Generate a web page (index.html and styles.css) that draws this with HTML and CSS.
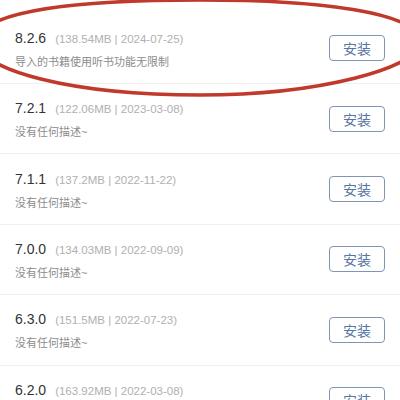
FILE: index.html
```html
<!DOCTYPE html>
<html lang="zh-CN">
<head>
<meta charset="utf-8">
<link rel="stylesheet" href="styles.css">
</head>
<body>
<div class="page">
  <ul class="list">
    <li class="row">
      <div class="info">
        <div class="head"><span class="ver">8.2.6</span><span class="meta">(138.54MB | 2024-07-25)</span></div>
        <div class="desc">导入的书籍使用听书功能无限制</div>
      </div>
      <button class="btn">安装</button>
    </li>
    <li class="row">
      <div class="info">
        <div class="head"><span class="ver">7.2.1</span><span class="meta">(122.06MB | 2023-03-08)</span></div>
        <div class="desc">没有任何描述~</div>
      </div>
      <button class="btn">安装</button>
    </li>
    <li class="row">
      <div class="info">
        <div class="head"><span class="ver">7.1.1</span><span class="meta">(137.2MB | 2022-11-22)</span></div>
        <div class="desc">没有任何描述~</div>
      </div>
      <button class="btn">安装</button>
    </li>
    <li class="row">
      <div class="info">
        <div class="head"><span class="ver">7.0.0</span><span class="meta">(134.03MB | 2022-09-09)</span></div>
        <div class="desc">没有任何描述~</div>
      </div>
      <button class="btn">安装</button>
    </li>
    <li class="row">
      <div class="info">
        <div class="head"><span class="ver">6.3.0</span><span class="meta">(151.5MB | 2022-07-23)</span></div>
        <div class="desc">没有任何描述~</div>
      </div>
      <button class="btn">安装</button>
    </li>
    <li class="row">
      <div class="info">
        <div class="head"><span class="ver">6.2.0</span><span class="meta">(163.92MB | 2022-03-08)</span></div>
        <div class="desc">没有任何描述~</div>
      </div>
      <button class="btn">安装</button>
    </li>
  </ul>
  <svg class="mark" width="400" height="110" viewBox="0 0 400 110" aria-hidden="true">
    <path d="M -24,42 C -20,10 80,0 200,0 C 320,0 418,12 422,42 C 418,68 320,95 200,95 C 70,95 -20,70 -24,42 Z" fill="none" stroke="#c0392b" stroke-width="3.5"/>
  </svg>
</div>
</body>
</html>
```
FILE: styles.css
```css
html, body {
  margin: 0;
  padding: 0;
  background: #ffffff;
}
body {
  width: 400px;
  height: 400px;
  overflow: hidden;
  font-family: "Liberation Sans", "Noto Sans CJK SC", sans-serif;
}
.page {
  position: relative;
  width: 400px;
  height: 400px;
  overflow: hidden;
}
.list {
  list-style: none;
  margin: 13.6px 0 0 0;
  padding: 0;
}
.row {
  box-sizing: border-box;
  height: 70.4px;
  padding: 0 15px;
  border-bottom: 1px solid #f0f0f0;
  display: flex;
  align-items: center;
  justify-content: space-between;
}
.info {
  padding-top: 3px;
  display: flex;
  flex-direction: column;
  gap: 4px;
}
.head {
  height: 20px;
  line-height: 20px;
  display: flex;
  align-items: baseline;
  white-space: nowrap;
}
.ver {
  font-size: 14px;
  color: #333333;
}
.meta {
  font-size: 11.5px;
  color: #b0b0b0;
  margin-left: 9px;
}
.desc {
  height: 20px;
  line-height: 20px;
  font-size: 11px;
  color: #8c8c8c;
  white-space: nowrap;
}
.btn {
  box-sizing: border-box;
  width: 56px;
  height: 26px;
  padding: 0;
  margin: 0 0 0 0;
  background: #ffffff;
  border: 1px solid #7f95b4;
  border-radius: 4px;
  color: #5676a4;
  font-family: "Noto Sans CJK SC", sans-serif;
  font-size: 14px;
  line-height: 24px;
}
.mark {
  position: absolute;
  left: 0;
  top: 0;
  pointer-events: none;
}
```
